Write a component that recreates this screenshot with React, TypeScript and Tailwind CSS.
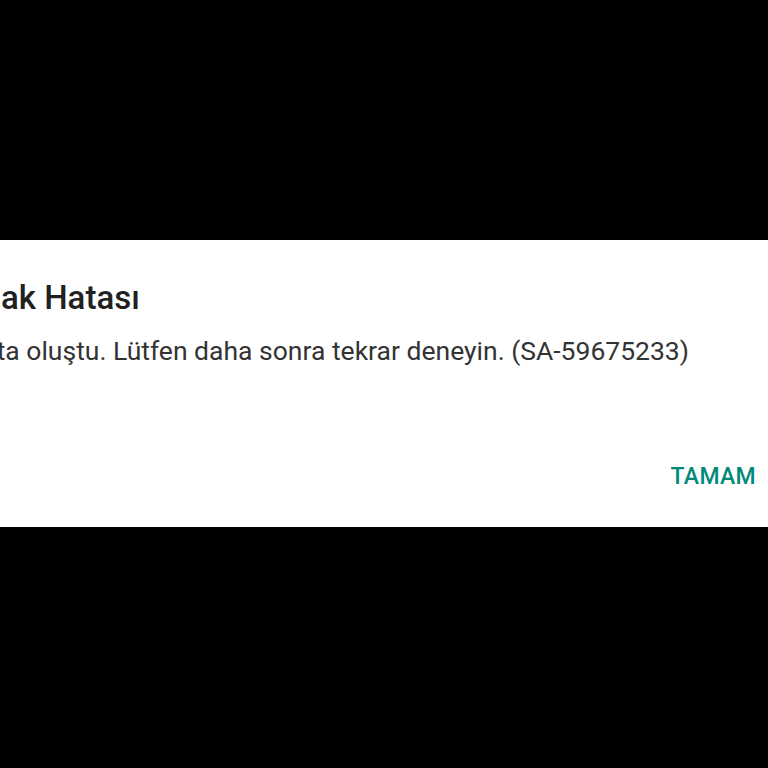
export default function App() {
  return (
    <div className="flex h-[768px] w-[768px] flex-col overflow-hidden bg-black" style={{ fontFamily: "Roboto, 'Noto Sans', sans-serif" }}>
      <div className="h-[240px] shrink-0" />
      <div className="relative h-[287px] shrink-0 overflow-hidden bg-white">
        <div className="pt-[38px]">
          <h2 className="whitespace-nowrap pl-[1px] text-[33px] leading-[40px] font-medium text-[#212121]">
            ak Hatası
          </h2>
          <div className="mt-[16px] flex w-[689px] justify-end">
            <p className="shrink-0 whitespace-nowrap text-[26.5px] leading-[34px] text-[#333333]">
              Bir hata oluştu. Lütfen daha sonra tekrar deneyin. (SA-59675233)
            </p>
          </div>
        </div>
        <div className="absolute right-[12px] top-[222px]">
          <button className="text-[23px] font-medium leading-[30px] tracking-[0.3px] text-[#00897b]">TAMAM</button>
        </div>
      </div>
      <div className="flex-1" />
    </div>
  );
}
